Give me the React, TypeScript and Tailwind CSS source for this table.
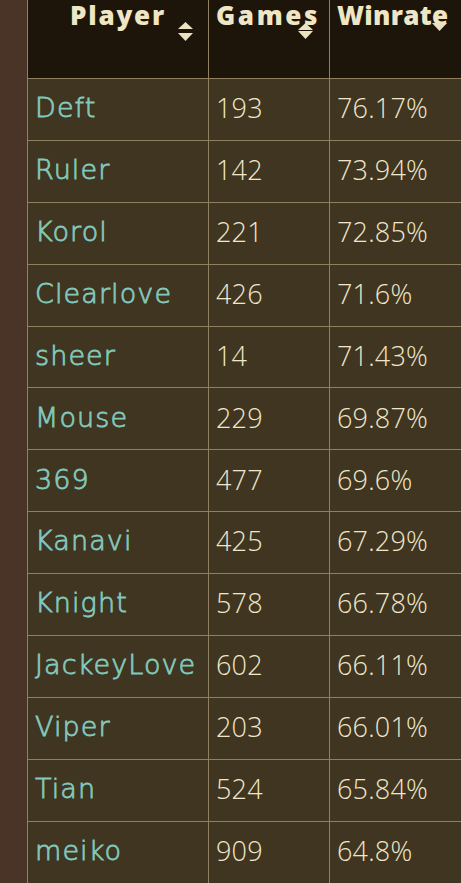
import React from "react";

const rows: [string, string, string][] = [
  ["Deft", "193", "76.17%"],
  ["Ruler", "142", "73.94%"],
  ["Korol", "221", "72.85%"],
  ["Clearlove", "426", "71.6%"],
  ["sheer", "14", "71.43%"],
  ["Mouse", "229", "69.87%"],
  ["369", "477", "69.6%"],
  ["Kanavi", "425", "67.29%"],
  ["Knight", "578", "66.78%"],
  ["JackeyLove", "602", "66.11%"],
  ["Viper", "203", "66.01%"],
  ["Tian", "524", "65.84%"],
  ["meiko", "909", "64.8%"],
];

function Up({ className }: { className: string }) {
  return (
    <svg className={className} width="15" height="7" viewBox="0 0 15 7">
      <polygon points="7.5,0 15,7 0,7" fill="#ece2c2" />
    </svg>
  );
}
function Down({ className }: { className: string }) {
  return (
    <svg className={className} width="15" height="8" viewBox="0 0 15 8">
      <polygon points="0,0 15,0 7.5,8" fill="#ece2c2" />
    </svg>
  );
}

export default function App() {
  const head = "relative h-[90px] border-b border-[#8f8062] bg-[#1d150a] text-[#efe6c6] font-extrabold text-[26px] leading-[26px] overflow-visible";
  const font = { fontFamily: '"Open Sans", "Noto Sans", sans-serif' };
  return (
    <div className="w-[461px] h-[883px] overflow-hidden bg-[#4a3327] flex">
      <div className="w-[27px] shrink-0 bg-[#4a3327]" />
      <div className="flex-1 -mt-[11px] border-l border-[#8f8062] bg-[#3f3520] overflow-hidden">
        <div className="grid grid-cols-[180px_121px_1fr]" style={font}>
          <div className={head}>
            <div className="text-center pt-[13px] tracking-[1.8px]">Player</div>
            <Up className="absolute left-[150px] top-[33px]" />
            <Down className="absolute left-[150px] top-[44px]" />
          </div>
          <div className={head + " border-l"}>
            <div className="pl-[7px] pt-[13px] whitespace-nowrap tracking-[2.6px]">Games</div>
            <Up className="absolute left-[89px] top-[34px]" />
            <Down className="absolute left-[89px] top-[42px]" />
          </div>
          <div className={head + " border-l"}>
            <div className="pl-[7px] pt-[13px] whitespace-nowrap tracking-[0.3px]">Winrate</div>
            <Down className="absolute left-[102px] top-[34px]" />
          </div>
        </div>
        <div style={{ fontFamily: '"Open Sans", Roboto, sans-serif' }}>
          {rows.map(([p, g, w]) => (
            <div key={p} className="grid grid-cols-[180px_121px_1fr] h-[61.9px] border-b border-[#8f8062] text-[27px] font-light tracking-[0.2px]">
              <div
                className="flex items-center pl-[7px] pb-[2px] text-[#82c9bd] text-[27px] font-extralight tracking-[1.1px] [-webkit-text-stroke:0.8px_#82c9bd]"
                style={{ fontFamily: '"DejaVu Sans", "Open Sans", sans-serif' }}
              >
                {p}
              </div>
              <div className="flex items-center pl-[7px] pb-[2px] border-l border-[#8f8062] text-[#f0e7ca]">{g}</div>
              <div className="flex items-center pl-[7px] pb-[2px] border-l border-[#8f8062] text-[#f0e7ca] whitespace-nowrap">{w}</div>
            </div>
          ))}
        </div>
      </div>
    </div>
  );
}
